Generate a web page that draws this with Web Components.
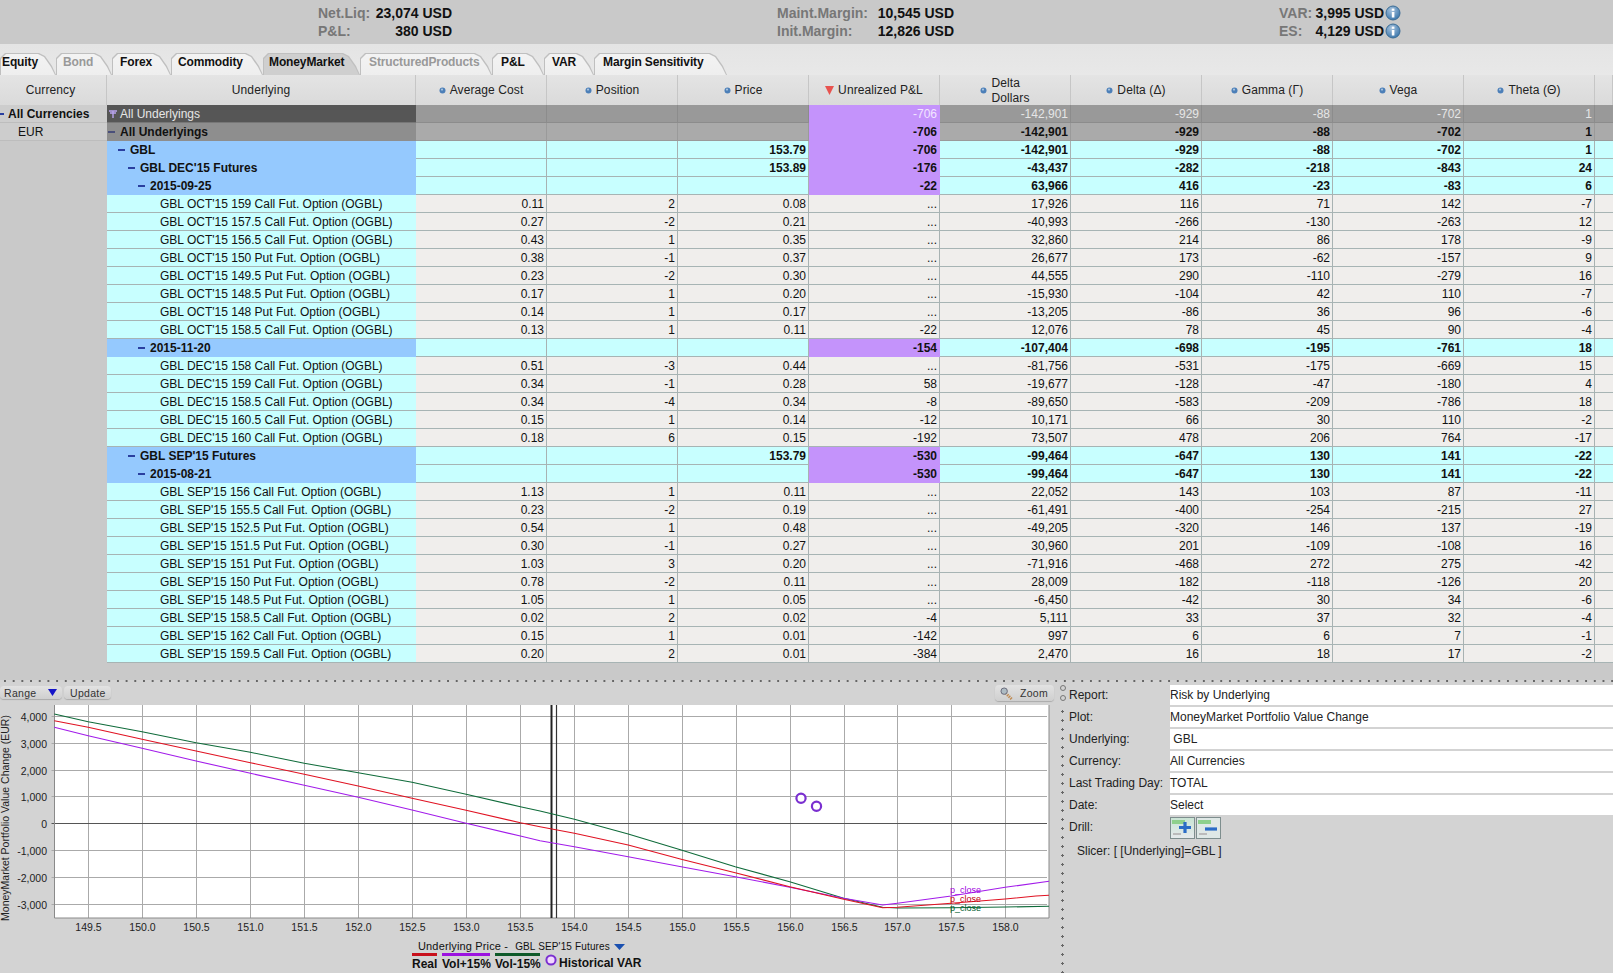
<!DOCTYPE html>
<html>
<head>
<meta charset="utf-8">
<title>Risk Navigator</title>
<style>
  html, body { margin: 0; padding: 0; height: 973px; overflow: hidden; background: #c9c9c9; font: 12px "Liberation Sans", Arial, sans-serif; color: #111; }
</style>
</head>
<body>
<summary-bar>
  <summary-group>
    <summary-item label="Net.Liq:" value="23,074 USD" style="width:134px"></summary-item>
    <summary-item label="P&amp;L:" value="380 USD" style="width:134px"></summary-item>
  </summary-group>
  <summary-group style="margin-left:325px">
    <summary-item label="Maint.Margin:" value="10,545 USD" style="width:177px"></summary-item>
    <summary-item label="Init.Margin:" value="12,826 USD" style="width:177px"></summary-item>
  </summary-group>
  <summary-group style="margin-left:325px">
    <summary-item label="VAR:" value="3,995 USD" info style="width:122px"></summary-item>
    <summary-item label="ES:" value="4,129 USD" info style="width:122px"></summary-item>
  </summary-group>
</summary-bar>
<tab-strip>
  <risk-tab style="--w:56px;--p:2px">Equity</risk-tab>
  <risk-tab off style="--w:56px;--p:7px">Bond</risk-tab>
  <risk-tab style="--w:59px;--p:8px">Forex</risk-tab>
  <risk-tab style="--w:92px;--p:7px">Commodity</risk-tab>
  <risk-tab active style="--w:97px;--p:6px">MoneyMarket</risk-tab>
  <risk-tab off style="--w:132px;--p:9px">StructuredProducts</risk-tab>
  <risk-tab style="--w:52px;--p:9px">P&amp;L</risk-tab>
  <risk-tab style="--w:50px;--p:8px">VAR</risk-tab>
  <risk-tab style="--w:133px;--p:9px">Margin Sensitivity</risk-tab>
</tab-strip>
<risk-table></risk-table>
<bottom-pane>
  <value-chart></value-chart>
  <pane-splitter></pane-splitter>
  <plot-info>
    <info-row label="Report:">Risk by Underlying</info-row>
    <info-row label="Plot:">MoneyMarket Portfolio Value Change</info-row>
    <info-row label="Underlying:">&nbsp;GBL</info-row>
    <info-row label="Currency:">All Currencies</info-row>
    <info-row label="Last Trading Day:">TOTAL</info-row>
    <info-row label="Date:">Select</info-row>
  </plot-info>
</bottom-pane>

<script>
const FONT = '"Liberation Sans", Arial, sans-serif';

class SummaryBar extends HTMLElement {
  connectedCallback() {
    this.attachShadow({ mode: 'open' });
    this.shadowRoot.innerHTML = `
      <style>
        :host { display: flex; height: 44px; padding-left: 318px; background: #c9c9c9; border-bottom: 1px solid #e4e4e4; box-sizing: content-box; }
      </style>
      <slot></slot>`;
  }
}
customElements.define('summary-bar', SummaryBar);

class SummaryGroup extends HTMLElement {
  connectedCallback() {
    this.attachShadow({ mode: 'open' });
    this.shadowRoot.innerHTML = `
      <style>
        :host { display: flex; flex-direction: column; padding-top: 4px; gap: 0; }
      </style>
      <slot></slot>`;
  }
}
customElements.define('summary-group', SummaryGroup);

class SummaryItem extends HTMLElement {
  connectedCallback() {
    this.attachShadow({ mode: 'open' });
    const info = this.hasAttribute('info') ? `
      <svg width="16" height="16" viewBox="0 0 16 16" style="margin-left:1px;flex:none">
        <defs><radialGradient id="g" cx="40%" cy="30%" r="80%"><stop offset="0" stop-color="#a9c4de"/><stop offset="1" stop-color="#2f6ea6"/></radialGradient></defs>
        <circle cx="8" cy="8" r="7" fill="url(#g)" stroke="#3c6d96"/>
        <rect x="6.8" y="7" width="2.6" height="5.5" fill="#fff"/><rect x="6.8" y="3.6" width="2.6" height="2.2" fill="#fff"/>
      </svg>` : '';
    this.shadowRoot.innerHTML = `
      <style>
        :host { display: flex; align-items: center; height: 18px; font: bold 14px ${FONT}; white-space: nowrap; }
        .l { color: #777; }
        .v { margin-left: auto; color: #111; }
      </style>
      <span class="l">${this.getAttribute('label').replace('&', '&amp;')}</span>
      <span class="v">${this.getAttribute('value')}</span>${info}`;
  }
}
customElements.define('summary-item', SummaryItem);

class TabStrip extends HTMLElement {
  connectedCallback() {
    this.attachShadow({ mode: 'open' });
    this.shadowRoot.innerHTML = `
      <style>
        :host { display: flex; align-items: flex-end; height: 30px; background: linear-gradient(#e4e4e4, #e8e8e8); }
      </style>
      <slot></slot>`;
  }
}
customElements.define('tab-strip', TabStrip);

class RiskTab extends HTMLElement {
  connectedCallback() {
    this.attachShadow({ mode: 'open' });
    this.shadowRoot.innerHTML = `
      <style>
        :host { display: block; position: relative; box-sizing: border-box; width: var(--w); height: 22px; padding: 1px 0 0 var(--p); font: bold 12px/17px ${FONT}; letter-spacing: -.12px; color: #111; white-space: nowrap; }
        :host([off]) { color: #999; }
        .bg, .bg::after { position: absolute; inset: 0; clip-path: polygon(0 5px, 5px 0, calc(100% - 17px) 0, calc(100% - 11px) 3px, calc(100% - 4px) 13px, 100% 100%, 0 100%); }
        .bg { background: #bfbfbf; z-index: 0; }
        .bg::after { content: ''; inset: 1px 1px 0 1px; background: linear-gradient(#f3f3f3, #eeeeee); }
        :host([active]) .bg { background: #c0c0c0; }
        :host([active]) .bg::after { background: #cfcfcf; }
        .t { position: relative; z-index: 1; }
      </style>
      <div class="bg"></div><span class="t"><slot></slot></span>`;
  }
}
customElements.define('risk-tab', RiskTab);

const COLS = '107px 309px repeat(9, 131px) 1fr';

class HeadCell extends HTMLElement {
  connectedCallback() {
    this.attachShadow({ mode: 'open' });
    const sort = this.getAttribute('sort');
    let mark = '';
    if (sort === 'dot') mark = '<svg width="7" height="7" viewBox="0 0 7 7"><circle cx="3.5" cy="3.5" r="3" fill="#4c7fb8"/><circle cx="3" cy="2.6" r="1.1" fill="#a9c3de"/></svg>';
    if (sort === 'down') mark = '<svg width="9" height="9" viewBox="0 0 9 9"><path d="M0 0H9L4.5 9Z" fill="#e8534f"/></svg>';
    this.shadowRoot.innerHTML = `
      <style>
        :host { display: flex; align-items: center; justify-content: center; gap: 4px; box-sizing: border-box; height: 30px; border-right: 1px solid #c6c6c6; background: linear-gradient(#e4e4e4, #dadada); color: #222; text-align: left; line-height: 15px; letter-spacing: .1px; overflow: hidden; padding-top: 1px; }
      </style>
      ${mark}<span><slot></slot></span>`;
  }
}
customElements.define('head-cell', HeadCell);

class RiskRow extends HTMLElement {
  set data(d) {
    this.attachShadow({ mode: 'open' });
    const vals = d.cells.map((c, i) => `<div class="c${i === 3 ? ' pnl' : ''}">${c}</div>`).join('');
    const cur = d.cur || '';
    const mark = d.minus ? '<i></i>' : '';
    this.shadowRoot.innerHTML = `
      <style>
        :host { display: grid; grid-template-columns: ${COLS}; height: 18px; box-sizing: border-box; white-space: nowrap; line-height: 19px; color: #111; }
        .cur { background: #c9c9c9; box-sizing: border-box; padding-left: ${d.curIndent || 0}px; font-weight: ${d.curBold ? 'bold' : 'normal'}; position: relative; overflow: hidden; }
        .cur.band { background: #cdcdcd; border-bottom: 1px solid #bdbdbd; }
        .cur.on::before { content: ''; position: absolute; left: 0; top: 8px; width: 4px; height: 2px; background: #2a3fa0; }
        .name, .c { box-sizing: border-box; border-bottom: 1px solid #a7b4b4; overflow: hidden; }
        .name { padding-left: ${d.indent}px; position: relative; }
        .name i { position: absolute; left: ${d.indent - 12}px; top: 8px; width: 7px; height: 2px; background: #2a3fa0; }
        .c { text-align: right; padding-right: 2px; border-right: 1px solid #a8b2b2; }
        :host(.t0) .name { background: #565656; color: #e6e6e6; border-color: #777; }
        :host(.t0) .c { background: #999; color: #e6e6e6; border-color: #8c8c8c; }
        :host(.t0) .pnl { background: #c493fb; color: #f2e6ff; border-color: #c493fb; }
        :host(.t1) { font-weight: bold; }
        :host(.t1) .name { background: #8e8e8e; border-color: #8e8e8e; }
        :host(.t1) .name i { background: #4a4f7a; }
        :host(.t1) .c { background: #aaa; border-color: #9a9a9a; }
        :host(.t1) .pnl { background: #c493fb; border-color: #c493fb; }
        :host(.g) { font-weight: bold; }
        :host(.g) .name { background: #95c9fe; border-color: #95c9fe; }
        :host(.g) .c { background: #c8ffff; }
        :host(.g) .pnl { background: #c493fb; border-color: #c493fb; }
        :host(.o) .name { background: #c8ffff; }
        :host(.o) .c { background: #f0eeec; }
        .ic { position: absolute; left: 2px; top: 5px; width: 8px; height: 8px; }
      </style>
      <div class="cur${d.curBold ? ' on' : ''}${d.cur ? ' band' : ''}">${cur}</div>
      <div class="name">${d.icon ? '<svg class="ic" viewBox="0 0 8 8"><path d="M0 1H8M4 1V8M1 3H7" stroke="#b9a4ef" stroke-width="1.4" fill="none"/></svg>' : ''}${mark}${d.name}</div>
      ${vals}<div class="c" style="border-right:0"></div>`;
  }
}
customElements.define('risk-row', RiskRow);

const ROWS = [
  ['t0', 13, 'All Underlyings', '', '', '', '-706', '-142,901', '-929', '-88', '-702', '1'],
  ['t1', 13, 'All Underlyings', '', '', '', '-706', '-142,901', '-929', '-88', '-702', '1'],
  ['g', 23, 'GBL', '', '', '153.79', '-706', '-142,901', '-929', '-88', '-702', '1'],
  ['g', 33, "GBL DEC'15 Futures", '', '', '153.89', '-176', '-43,437', '-282', '-218', '-843', '24'],
  ['g', 43, '2015-09-25', '', '', '', '-22', '63,966', '416', '-23', '-83', '6'],
  ['o', 53, "GBL OCT'15 159 Call Fut. Option (OGBL)", '0.11', '2', '0.08', '...', '17,926', '116', '71', '142', '-7'],
  ['o', 53, "GBL OCT'15 157.5 Call Fut. Option (OGBL)", '0.27', '-2', '0.21', '...', '-40,993', '-266', '-130', '-263', '12'],
  ['o', 53, "GBL OCT'15 156.5 Call Fut. Option (OGBL)", '0.43', '1', '0.35', '...', '32,860', '214', '86', '178', '-9'],
  ['o', 53, "GBL OCT'15 150 Put Fut. Option (OGBL)", '0.38', '-1', '0.37', '...', '26,677', '173', '-62', '-157', '9'],
  ['o', 53, "GBL OCT'15 149.5 Put Fut. Option (OGBL)", '0.23', '-2', '0.30', '...', '44,555', '290', '-110', '-279', '16'],
  ['o', 53, "GBL OCT'15 148.5 Put Fut. Option (OGBL)", '0.17', '1', '0.20', '...', '-15,930', '-104', '42', '110', '-7'],
  ['o', 53, "GBL OCT'15 148 Put Fut. Option (OGBL)", '0.14', '1', '0.17', '...', '-13,205', '-86', '36', '96', '-6'],
  ['o', 53, "GBL OCT'15 158.5 Call Fut. Option (OGBL)", '0.13', '1', '0.11', '-22', '12,076', '78', '45', '90', '-4'],
  ['g', 43, '2015-11-20', '', '', '', '-154', '-107,404', '-698', '-195', '-761', '18'],
  ['o', 53, "GBL DEC'15 158 Call Fut. Option (OGBL)", '0.51', '-3', '0.44', '...', '-81,756', '-531', '-175', '-669', '15'],
  ['o', 53, "GBL DEC'15 159 Call Fut. Option (OGBL)", '0.34', '-1', '0.28', '58', '-19,677', '-128', '-47', '-180', '4'],
  ['o', 53, "GBL DEC'15 158.5 Call Fut. Option (OGBL)", '0.34', '-4', '0.34', '-8', '-89,650', '-583', '-209', '-786', '18'],
  ['o', 53, "GBL DEC'15 160.5 Call Fut. Option (OGBL)", '0.15', '1', '0.14', '-12', '10,171', '66', '30', '110', '-2'],
  ['o', 53, "GBL DEC'15 160 Call Fut. Option (OGBL)", '0.18', '6', '0.15', '-192', '73,507', '478', '206', '764', '-17'],
  ['g', 33, "GBL SEP'15 Futures", '', '', '153.79', '-530', '-99,464', '-647', '130', '141', '-22'],
  ['g', 43, '2015-08-21', '', '', '', '-530', '-99,464', '-647', '130', '141', '-22'],
  ['o', 53, "GBL SEP'15 156 Call Fut. Option (OGBL)", '1.13', '1', '0.11', '...', '22,052', '143', '103', '87', '-11'],
  ['o', 53, "GBL SEP'15 155.5 Call Fut. Option (OGBL)", '0.23', '-2', '0.19', '...', '-61,491', '-400', '-254', '-215', '27'],
  ['o', 53, "GBL SEP'15 152.5 Put Fut. Option (OGBL)", '0.54', '1', '0.48', '...', '-49,205', '-320', '146', '137', '-19'],
  ['o', 53, "GBL SEP'15 151.5 Put Fut. Option (OGBL)", '0.30', '-1', '0.27', '...', '30,960', '201', '-109', '-108', '16'],
  ['o', 53, "GBL SEP'15 151 Put Fut. Option (OGBL)", '1.03', '3', '0.20', '...', '-71,916', '-468', '272', '275', '-42'],
  ['o', 53, "GBL SEP'15 150 Put Fut. Option (OGBL)", '0.78', '-2', '0.11', '...', '28,009', '182', '-118', '-126', '20'],
  ['o', 53, "GBL SEP'15 148.5 Put Fut. Option (OGBL)", '1.05', '1', '0.05', '...', '-6,450', '-42', '30', '34', '-6'],
  ['o', 53, "GBL SEP'15 158.5 Call Fut. Option (OGBL)", '0.02', '2', '0.02', '-4', '5,111', '33', '37', '32', '-4'],
  ['o', 53, "GBL SEP'15 162 Call Fut. Option (OGBL)", '0.15', '1', '0.01', '-142', '997', '6', '6', '7', '-1'],
  ['o', 53, "GBL SEP'15 159.5 Call Fut. Option (OGBL)", '0.20', '2', '0.01', '-384', '2,470', '16', '18', '17', '-2'],
];

class RiskTable extends HTMLElement {
  connectedCallback() {
    this.attachShadow({ mode: 'open' });
    const heads = [['Currency', ''], ['Underlying', ''], ['Average Cost', 'dot'], ['Position', 'dot'], ['Price', 'dot'],
      ['Unrealized P&amp;L', 'down'], ['Delta<br>Dollars', 'dot'], ['Delta (Δ)', 'dot'], ['Gamma (Γ)', 'dot'], ['Vega', 'dot'], ['Theta (Θ)', 'dot'], ['', '']];
    this.shadowRoot.innerHTML = `
      <style>
        :host { display: block; height: 605px; background: #c9c9c9; }
        .head { display: grid; grid-template-columns: ${COLS}; height: 30px; }
        .head head-cell:first-child { padding-right: 5px; }
      </style>
      <div class="head">${heads.map(h => `<head-cell sort="${h[1]}">${h[0]}</head-cell>`).join('')}</div>
      <div class="rows"></div>`;
    const box = this.shadowRoot.querySelector('.rows');
    ROWS.forEach((r, i) => {
      const row = document.createElement('risk-row');
      row.className = r[0];
      row.data = {
        indent: r[1], name: r[2], cells: r.slice(3), minus: r[0] === 't1' || r[0] === 'g', icon: i === 0,
        cur: i === 0 ? 'All Currencies' : i === 1 ? 'EUR' : '', curBold: i === 0, curIndent: i === 0 ? 8 : i === 1 ? 18 : 0
      };
      box.appendChild(row);
    });
  }
}
customElements.define('risk-table', RiskTable);

class BottomPane extends HTMLElement {
  connectedCallback() {
    this.attachShadow({ mode: 'open' });
    this.shadowRoot.innerHTML = `
      <style>
        :host { display: flex; height: 293px; padding-top: 4px; box-sizing: border-box; background: #d3d3d3 radial-gradient(circle at 1px 1px, #666 1px, transparent 1.3px) 4px 0 / 8.7px 3px repeat-x; }
      </style>
      <slot></slot>`;
  }
}
customElements.define('bottom-pane', BottomPane);

const px = p => 88.2 + (p - 149.5) * 107.9;
const py = v => 823.3 - v * 0.02685;
const z3 = (pts) => pts.map(([x, y]) => [x / 2.8, 650 + y / 3]);
const z4 = (pts) => pts.map(([x, y]) => [540 + x / 2.904, 650 + y / 3]);
const line = pts => pts.map(p => p[0].toFixed(1) + ',' + p[1].toFixed(1)).join(' ');

const GREEN = z3([[152,192],[247,215],[398,245],[549,278],[701,307],[852,340],[1003,368],[1154,397],[1305,433],[1457,470]]).concat(
  z4([[0,483],[100,508],[256,552],[410,600],[567,650],[725,695],[882,745],[995,772],[1038,774],[1194,773],[1351,771],[1478,769]]));
const RED = z3([[152,212],[247,232],[398,268],[549,303],[701,338],[852,373],[1003,408],[1154,445],[1305,481],[1457,518]]).concat(
  z4([[0,530],[100,550],[256,585],[410,628],[567,668],[725,710],[882,748],[995,773],[1038,772],[1194,760],[1351,747],[1440,738],[1478,736]]));
const PURPLE = z3([[152,232],[247,257],[398,295],[549,333],[701,370],[852,406],[1003,442],[1154,480],[1305,520],[1457,558]]).concat(
  z4([[0,572],[100,590],[256,620],[410,650],[567,680],[725,712],[882,745],[995,765],[1038,760],[1194,738],[1351,712],[1478,694]]));

class ValueChart extends HTMLElement {
  connectedCallback() {
    this.attachShadow({ mode: 'open' });
    const L = 54.5, R = 1049, T = 705, B = 918;
    let grid = '', labels = '';
    for (let p = 149.5; p <= 158; p += 0.5) {
      const x = Math.round(px(p)) + 0.5;
      grid += `<line x1="${x}" x2="${x}" y1="${T}" y2="${B}" stroke="#aaa"/>`;
      labels += `<text x="${x}" y="931" text-anchor="middle">${p.toFixed(1)}</text>`;
    }
    for (let v = -3000; v <= 4000; v += 1000) {
      const y = Math.round(py(v)) + 0.5;
      grid += `<line x1="${L - 3}" x2="${R - 2}" y1="${y}" y2="${y}" stroke="${v === 0 ? '#555' : '#aaa'}"/>`;
      labels += `<text x="47" y="${y + 4}" text-anchor="end">${v.toLocaleString('en-US')}</text>`;
    }
    this.shadowRoot.innerHTML = `
      <style>
        :host { display: block; width: 1058px; flex: none; }
        .tools { display: flex; height: 20px; align-items: flex-start; padding-top: 1px; gap: 2px; }
        .btn { display: flex; align-items: center; box-sizing: border-box; height: 13px; margin-top: 1px; border-radius: 4px; background: linear-gradient(#e2e2e2, #cfcfcf); box-shadow: 0 1px 1px #aaa; font: 10.5px ${FONT}; letter-spacing: .3px; color: #333; padding: 0 6px 0 4px; }
        .range { width: 62px; justify-content: space-between; padding-right: 5px; }
        .upd { width: 47px; padding-left: 6px; }
        .zoom { margin-left: auto; width: 59px; height: 16px; margin-top: 0; gap: 5px; margin-right: 4px; }
        svg.plot { display: block; font: 10.5px ${FONT}; fill: #222; }
      </style>
      <div class="tools">
        <div class="btn range">Range <svg width="9" height="7" viewBox="0 0 9 7"><path d="M0 0H9L4.5 7Z" fill="#1414c8"/></svg></div>
        <div class="btn upd">Update</div>
        <div class="btn zoom">
          <svg width="17" height="15" viewBox="0 0 17 15"><path d="M7 7L14 14" stroke="#c08a50" stroke-width="3" stroke-dasharray="1.5 1"/><circle cx="5.5" cy="5" r="3.4" fill="#aebcc4" stroke="#667"/></svg>Zoom
        </div>
      </div>
      <svg class="plot" width="1058" height="235" viewBox="0 705 1058 235">
        <rect x="${L}" y="${T}" width="${R - L}" height="${B - T}" fill="#fff"/>
        ${grid}
        <path d="M${L} ${T}V${B}H${R}V${T}" fill="none" stroke="#8a8a8a"/>
        <line x1="551.5" x2="551.5" y1="${T}" y2="${B}" stroke="#222" stroke-width="2"/>
        <line x1="556.5" x2="556.5" y1="${T}" y2="${B}" stroke="#333" stroke-width="1.2"/>
        <polyline points="${line(GREEN)}" fill="none" stroke="#0f6b3a" stroke-width="1.1"/>
        <polyline points="${line(PURPLE)}" fill="none" stroke="#a21bea" stroke-width="1.1"/>
        <polyline points="${line(RED)}" fill="none" stroke="#e01222" stroke-width="1.1"/>
        <circle cx="801" cy="798.3" r="4.6" fill="#fff" stroke="#7a2fd0" stroke-width="2.2"/>
        <circle cx="816.5" cy="806.3" r="4.6" fill="#fff" stroke="#7a2fd0" stroke-width="2.2"/>
        <g font-size="9">
          <text x="950" y="893" fill="#a000e0">p_close</text>
          <text x="950" y="902" fill="#c00010">p_close</text>
          <text x="950" y="911" fill="#006030">p_close</text>
        </g>
        ${labels}
        <text transform="translate(8.5 818) rotate(-90)" text-anchor="middle" font-size="10.5">MoneyMarket Portfolio Value Change (EUR)</text>
      </svg>
      <chart-legend></chart-legend>`;
  }
}
customElements.define('value-chart', ValueChart);

class ChartLegend extends HTMLElement {
  connectedCallback() {
    this.attachShadow({ mode: 'open' });
    this.shadowRoot.innerHTML = `
      <style>
        :host { display: block; padding-left: 412px; color: #111; white-space: nowrap; }
        .top { display: flex; height: 13px; padding-left: 6px; font: 11px/13px ${FONT}; letter-spacing: .15px; gap: 7px; align-items: center; }
        .gbl { font-size: 10px; }
        .bot { display: flex; gap: 5px; }
        .k { display: block; width: var(--w); font: bold 12px/13px ${FONT}; }
        .k::before { content: ''; display: block; height: 3px; margin-bottom: 2px; background: var(--c); }
        .var { display: flex; align-items: flex-start; font: bold 12px/13px ${FONT}; gap: 2px; margin-top: 1px; }
        .var span { padding-top: 3px; }
      </style>
      <div class="top"><span>Underlying Price -</span><span class="gbl">GBL SEP'15 Futures</span><svg width="11" height="6" viewBox="0 0 11 6" style="margin-left:-3px"><path d="M0 0H11L5.5 6Z" fill="#1a50b0"/></svg></div>
      <div class="bot">
        <span class="k" style="--c:#c8101c;--w:25px">Real</span>
        <span class="k" style="--c:#9c12e0;--w:48px">Vol+15%</span>
        <span class="k" style="--c:#0f5a2a;--w:45px">Vol-15%</span>
        <span class="var"><svg width="12" height="12" viewBox="0 0 12 12"><circle cx="6" cy="6" r="4.6" fill="#f2d8ff" stroke="#7a2fd0" stroke-width="2"/></svg><span>Historical VAR</span></span>
      </div>`;
  }
}
customElements.define('chart-legend', ChartLegend);

class PaneSplitter extends HTMLElement {
  connectedCallback() {
    this.attachShadow({ mode: 'open' });
    this.shadowRoot.innerHTML = `
      <style>
        :host { display: flex; flex-direction: column; align-items: center; width: 9px; flex: none; padding-top: 1px; box-sizing: border-box; }
        .h { width: 4px; height: 4px; border: 1px solid #777; border-radius: 50%; margin-bottom: 4px; background: #d3d3d3; }
        .d { flex: 1; width: 3px; margin-top: 2px; background: radial-gradient(circle, #666 1.1px, transparent 1.4px) 0 0 / 3px 9px repeat-y; }
      </style>
      <div class="h"></div><div class="h"></div><div class="d"></div>`;
  }
}
customElements.define('pane-splitter', PaneSplitter);

class PlotInfo extends HTMLElement {
  connectedCallback() {
    this.attachShadow({ mode: 'open' });
    this.shadowRoot.innerHTML = `
      <style>
        :host { display: block; flex: 1; padding-top: 1px; }
        .drill { display: flex; height: 22px; align-items: flex-start; margin-top: 1px; }
        .lab { width: 103px; padding-left: 2px; box-sizing: border-box; line-height: 20px; color: #222; }
        .drill svg { display: block; margin-right: 1px; }
        .slicer { padding: 5px 0 0 10px; color: #222; }
      </style>
      <slot></slot>
      <div class="drill">
        <span class="lab">Drill:</span>
        <svg width="25" height="22" viewBox="0 0 25 22"><defs><linearGradient id="b" x2="0" y2="1"><stop offset="0" stop-color="#c9e4d4"/><stop offset="1" stop-color="#e6eaec"/></linearGradient></defs><rect x=".5" y=".5" width="24" height="21" fill="url(#b)" stroke="#7e8e8e"/><rect x="2" y="3" width="13" height="4" fill="#8ed08c"/><rect x="3" y="16" width="8" height="2" fill="#bbb"/><path d="M9 10.5H21M15 5V16" stroke="#2b6cc6" stroke-width="3.2"/></svg>
        <svg width="25" height="22" viewBox="0 0 25 22"><rect x=".5" y=".5" width="24" height="21" fill="#dfe8e6" stroke="#7e8e8e"/><rect x="2" y="3" width="13" height="4" fill="#8ed08c"/><rect x="3" y="16" width="8" height="2" fill="#bbb"/><path d="M9 12H21" stroke="#2b6cc6" stroke-width="3.2"/></svg>
      </div>
      <div class="slicer">Slicer: [ [Underlying]=GBL ]</div>`;
  }
}
customElements.define('plot-info', PlotInfo);

class InfoRow extends HTMLElement {
  connectedCallback() {
    this.attachShadow({ mode: 'open' });
    this.shadowRoot.innerHTML = `
      <style>
        :host { display: flex; height: 19.5px; margin-bottom: 2.5px; line-height: 20px; color: #222; white-space: nowrap; }
        .lab { width: 103px; flex: none; padding-left: 2px; box-sizing: border-box; }
        .val { flex: 1; background: #fff; padding-left: 0; }
      </style>
      <span class="lab">${this.getAttribute('label')}</span>
      <span class="val"><slot></slot></span>`;
  }
}
customElements.define('info-row', InfoRow);
</script>
</body>
</html>
